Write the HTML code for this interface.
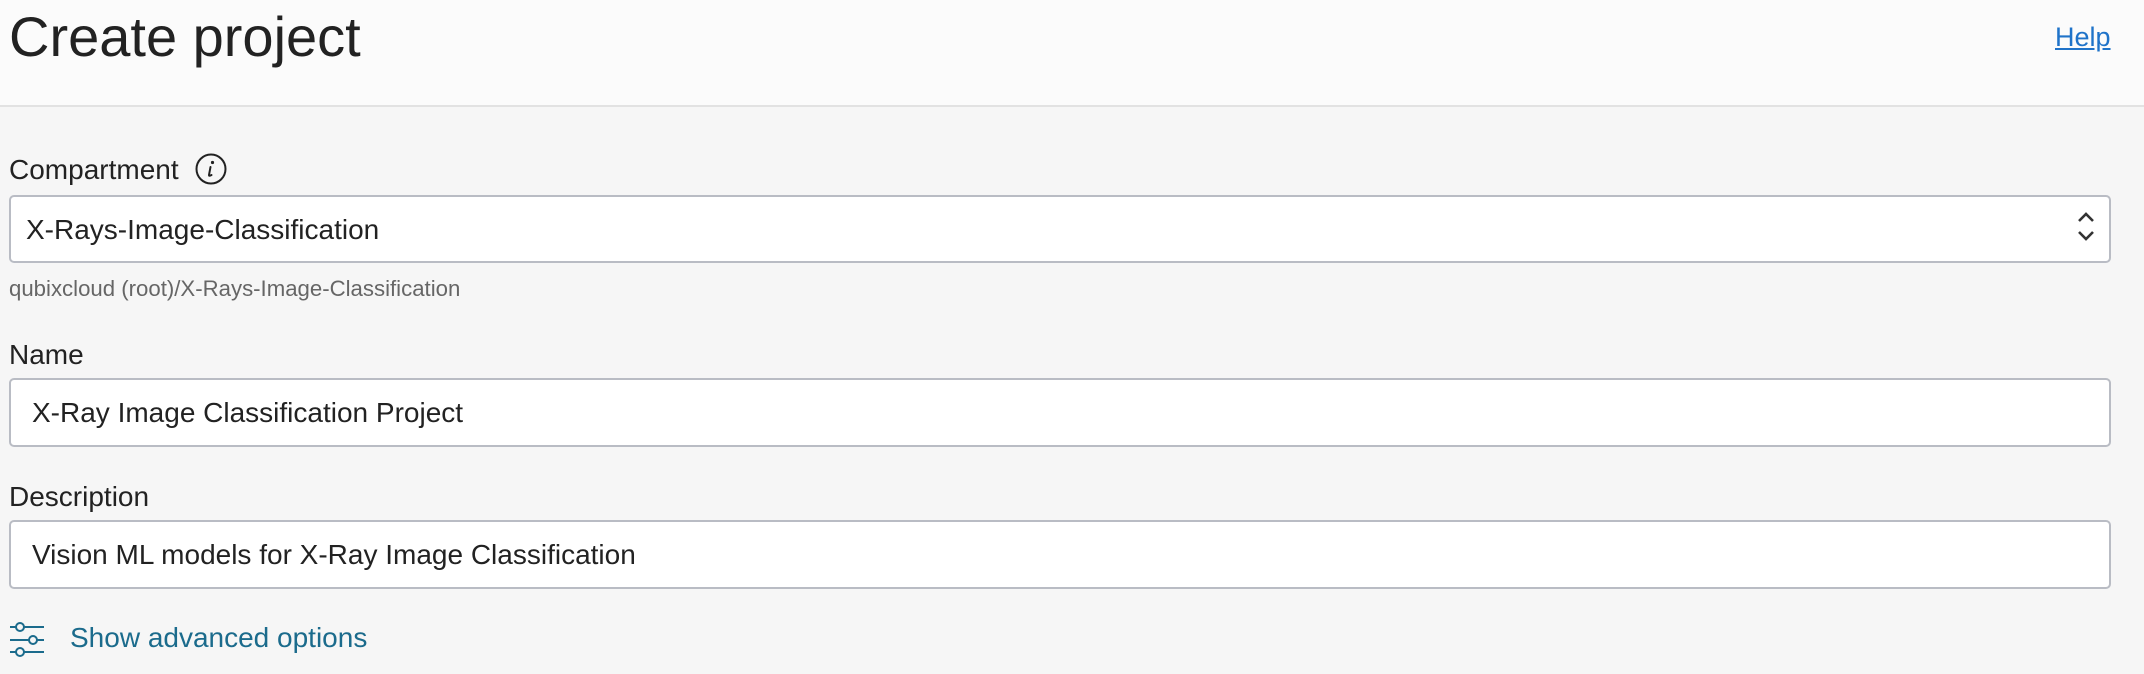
<!DOCTYPE html>
<html><head><meta charset="utf-8"><style>
*{box-sizing:border-box;margin:0;padding:0}
body{width:2144px;height:674px;background:#f6f6f6;font-family:"Liberation Sans",Arial,sans-serif;color:#222;position:relative;overflow:hidden}
.hdr{position:absolute;left:0;top:0;width:2144px;height:107px;background:#fbfbfb;border-bottom:2px solid #e2e2e2}
.t{position:absolute;left:9px;top:7px;font-size:56px;color:#222;line-height:60px}
.help{position:absolute;left:2055px;top:20px;font-size:27px;color:#1f73c9;text-decoration:underline;line-height:34px}
.lbl{position:absolute;left:9px;font-size:28px;line-height:32px;color:#222}
.box{position:absolute;left:9px;width:2102px;background:#fff;border:2px solid #b9bcc4;border-radius:5px;font-size:28px;line-height:32px;padding-top:17px}
.sub{position:absolute;left:9px;top:276px;font-size:22.2px;color:#666}
.adv{position:absolute;left:70px;top:622px;font-size:28px;color:#1b6b8c;line-height:32px}
</style></head><body>
<div class="hdr"><div class="t">Create project</div><div class="help">Help</div></div>
<div class="lbl" style="top:154px">Compartment</div>
<svg style="position:absolute;left:195px;top:153px" width="32" height="32" viewBox="0 0 32 32"><circle cx="16" cy="16" r="14.5" fill="none" stroke="#222" stroke-width="2"/><circle cx="17.5" cy="9.5" r="1.6" fill="#222"/><path d="M15.5 14 L14 22 Q14 23.5 16.5 22" fill="none" stroke="#222" stroke-width="2" stroke-linecap="round"/></svg>
<div class="box" style="top:195px;height:68px;padding-left:15px">X-Rays-Image-Classification</div>
<svg style="position:absolute;left:2076px;top:210px" width="20" height="34" viewBox="0 0 20 34"><path d="M3 11 L10 4 L17 11 M3 22 L10 29 L17 22" fill="none" stroke="#333" stroke-width="2.6"/></svg>
<div class="sub">qubixcloud (root)/X-Rays-Image-Classification</div>
<div class="lbl" style="top:339px">Name</div>
<div class="box" style="top:378px;height:69px;padding-left:21px">X-Ray Image Classification Project</div>
<div class="lbl" style="top:481px">Description</div>
<div class="box" style="top:520px;height:69px;padding-left:21px">Vision ML models for X-Ray Image Classification</div>
<svg style="position:absolute;left:9px;top:620px" width="36" height="38" viewBox="0 0 36 38"><g fill="none" stroke="#1b6b8c" stroke-width="2"><circle cx="11" cy="7" r="4"/><path d="M1 7h6M15 7h20"/><circle cx="24" cy="20" r="4"/><path d="M1 20h19M28 20h7"/><circle cx="11" cy="32" r="4"/><path d="M1 32h6M15 32h20"/></g></svg>
<div class="adv">Show advanced options</div>
</body></html>
